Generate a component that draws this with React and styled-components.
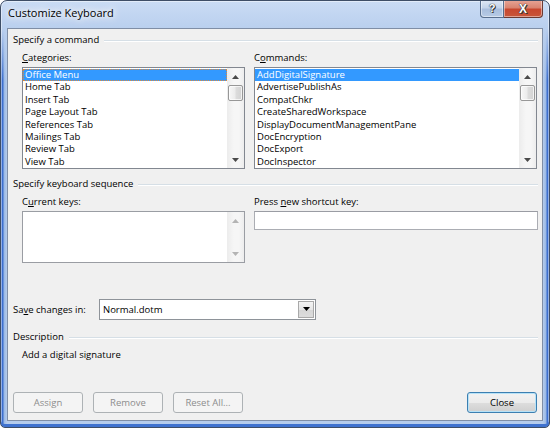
import React from "react";
import styled, { createGlobalStyle } from "styled-components";

const GlobalStyle = createGlobalStyle`
  html, body { margin: 0; padding: 0; background: #ffffff; }
  body { font-family: "Open Sans", "Liberation Sans", sans-serif; }
  * { box-sizing: border-box; }
`;

const Window = styled.div`
  width: 550px;
  height: 428px;
  border: 1px solid #3e4e66;
  border-radius: 7px 7px 5px 5px;
  display: flex;
  flex-direction: column;
  overflow: hidden;
  background:
    linear-gradient(to bottom, #cadcf4 0, #b9cfee 28px, rgba(182, 205, 238, 0) 80px),
    linear-gradient(
      to right,
      #3c6fcf 0,
      #3c6fcf 2px,
      #9ab8e4 3px,
      #b5ccec 6px,
      #b5ccec calc(100% - 6px),
      #9ab8e4 calc(100% - 3px),
      #3c6fcf calc(100% - 2px),
      #3c6fcf 100%
    );
  box-shadow: inset 0 -3px 0 #3f72cf, inset 0 0 0 1px rgba(255, 255, 255, 0.45);
`;

const TitleBar = styled.div`
  height: 27px;
  display: flex;
  align-items: flex-start;
  padding-left: 7px;
`;

const TitleText = styled.span`
  font-size: 11px;
  line-height: 23px;
  color: #000;
  text-shadow: 0 0 5px #ffffff, 0 0 9px #ffffff, 0 0 12px #ffffff;
`;

const TitleButtons = styled.div`
  display: flex;
  margin-left: auto;
  margin-right: 6px;
  margin-top: -1px;
`;

const CaptionButton = styled.div`
  width: ${(p) => p.$w}px;
  height: 18px;
  display: flex;
  align-items: center;
  justify-content: center;
  border: 1px solid ${(p) => (p.$red ? "#6b3a33" : "#586e8e")};
  border-top: none;
  border-radius: ${(p) => (p.$red ? "0 0 4px 0" : "0 0 0 4px")};
  ${(p) => (p.$red ? "border-left: none;" : "")}
  background: ${(p) =>
    p.$red
      ? "linear-gradient(to bottom, #e8a597 0, #d98471 45%, #c8472f 55%, #c8563a 100%)"
      : "linear-gradient(to bottom, #dfe8f5 0, #c4d4ea 45%, #a9bedd 55%, #b7cbe6 100%)"};
  box-shadow: inset 0 0 0 1px rgba(255, 255, 255, 0.45);
  color: #fff;
  font-family: "Liberation Sans", Arial, sans-serif;
  font-weight: bold;
  font-size: ${(p) => (p.$red ? 12 : 11)}px;
  line-height: 1;
  text-shadow: 0 0 1px #2a2a2a, 0 0 1px #2a2a2a, 1px 1px 0 #3a3a3a;
`;

const Client = styled.div`
  flex: 1;
  margin: 0 6px 6px 6px;
  background: #f0f0f0;
  border: 1px solid #7f8ea6;
  display: flex;
  flex-direction: column;
  padding: 4px 5px 7px 5px;
  font-size: 9.5px;
  color: #000;
`;

const SectionHeader = styled.div`
  display: flex;
  align-items: center;
  height: 14px;
  gap: 5px;
  margin-top: ${(p) => p.$top || 0}px;
  margin-right: -1px;
  line-height: 14px;
  white-space: nowrap;
`;

const Rule = styled.div`
  flex: 1;
  height: 1px;
  background: #d6dfe6;
  box-shadow: 0 1px 0 #ffffff;
`;

const FieldRow = styled.div`
  display: grid;
  grid-template-columns: 223px 1fr;
  column-gap: 9px;
  margin-left: 9px;
`;

const Field = styled.div`
  display: flex;
  flex-direction: column;
`;

const Label = styled.div`
  line-height: 14px;
  height: 14px;
  margin-top: 4px;
  margin-bottom: 2px;
  white-space: nowrap;
`;

const Key = styled.span`
  text-decoration: underline;
  text-underline-offset: 1px;
`;

const ListBox = styled.div`
  display: flex;
  height: ${(p) => p.$h}px;
  border: 1px solid ${(p) => p.$border || "#828790"};
  background: #ffffff;
`;

const Items = styled.div`
  flex: 1;
  padding-top: 1px;
  overflow: hidden;
`;

const Item = styled.div`
  height: 12.4px;
  line-height: 12.4px;
  padding-left: 2px;
  white-space: nowrap;
  background: ${(p) => (p.$selected ? "#3399ff" : "transparent")};
  color: ${(p) => (p.$selected ? "#ffffff" : "#000000")};
  outline: ${(p) => (p.$focus ? "1px dotted #e08a3a" : "none")};
  outline-offset: -1px;
`;

const ScrollBar = styled.div`
  width: 17px;
  display: flex;
  flex-direction: column;
  background: linear-gradient(to right, #ececec, #f6f6f6 40%, #f6f6f6 70%, #ededed);
`;

const ArrowButton = styled.div`
  height: 17px;
  display: flex;
  align-items: center;
  justify-content: center;
`;

const Track = styled.div`
  flex: 1;
`;

const Thumb = styled.div`
  height: 16px;
  margin: 0 1px;
  border: 1px solid #979797;
  border-radius: 2px;
  background: linear-gradient(to right, #f7f7f7, #ececec 45%, #dcdcdc 55%, #d2d2d2);
  box-shadow: inset 0 0 0 1px rgba(255, 255, 255, 0.7);
`;

const TextInput = styled.div`
  height: 19px;
  margin-right: -1px;
  border: 1px solid #abadb3;
  border-top-color: #9a9ca3;
  background: #ffffff;
`;

const SaveRow = styled.div`
  display: flex;
  align-items: center;
  height: 20px;
  margin-top: 36px;
`;

const SaveLabel = styled.div`
  width: 86px;
  white-space: nowrap;
`;

const SelectBox = styled.div`
  width: 217px;
  height: 21px;
  display: flex;
  align-items: center;
  border: 1px solid #8e9399;
  background: #ffffff;
`;

const SelectValue = styled.div`
  flex: 1;
  padding-left: 3px;
`;

const DropButton = styled.div`
  width: 16px;
  height: 17px;
  margin-right: 1px;
  display: flex;
  align-items: center;
  justify-content: center;
  border: 1px solid #a9a9a9;
  background: linear-gradient(to bottom, #f4f4f4, #e6e6e6 50%, #d6d6d6 51%, #dcdcdc);
`;

const DescText = styled.div`
  margin-top: 4px;
  padding-left: 9px;
  line-height: 14px;
`;

const ButtonRow = styled.div`
  display: flex;
  gap: 10px;
  margin-top: auto;
`;

const Button = styled.div`
  width: 70px;
  height: 21px;
  display: flex;
  align-items: center;
  justify-content: center;
  border-radius: 3px;
  ${(p) =>
    p.$default
      ? `
    margin-left: auto;
    border: 1px solid #3c7fb1;
    color: #000;
    background: linear-gradient(to bottom, #f2f2f2 0, #ebebeb 50%, #dddddd 51%, #cfcfcf 100%);
    box-shadow: inset 0 0 0 1px #b7e2f7;
  `
      : `
    border: 1px solid #adb2b5;
    color: #8d8d8d;
    background: #f4f4f4;
  `}
`;

const Tri = ({ dir = "up", color = "#4a4a4a" }) => (
  <svg width="7" height="4" viewBox="0 0 7 4">
    {dir === "up" ? (
      <polygon points="0,4 3.5,0 7,4" fill={color} />
    ) : (
      <polygon points="0,0 7,0 3.5,4" fill={color} />
    )}
  </svg>
);

const categories = [
  "Office Menu",
  "Home Tab",
  "Insert Tab",
  "Page Layout Tab",
  "References Tab",
  "Mailings Tab",
  "Review Tab",
  "View Tab",
];

const commands = [
  "AddDigitalSignature",
  "AdvertisePublishAs",
  "CompatChkr",
  "CreateSharedWorkspace",
  "DisplayDocumentManagementPane",
  "DocEncryption",
  "DocExport",
  "DocInspector",
];

const List = ({ items, focus }) => (
  <ListBox $h={102}>
    <Items>
      {items.map((t, i) => (
        <Item key={t} $selected={i === 0} $focus={focus && i === 0}>
          {t}
        </Item>
      ))}
    </Items>
    <ScrollBar>
      <ArrowButton>
        <Tri dir="up" />
      </ArrowButton>
      <Track>
        <Thumb />
      </Track>
      <ArrowButton>
        <Tri dir="down" />
      </ArrowButton>
    </ScrollBar>
  </ListBox>
);

export default function App() {
  return (
    <>
      <GlobalStyle />
      <Window>
        <TitleBar>
          <TitleText>Customize Keyboard</TitleText>
          <TitleButtons>
            <CaptionButton $w={24}>?</CaptionButton>
            <CaptionButton $w={39} $red>
              X
            </CaptionButton>
          </TitleButtons>
        </TitleBar>
        <Client>
          <SectionHeader>
            <span>Specify a command</span>
            <Rule />
          </SectionHeader>
          <FieldRow>
            <Field>
              <Label>
                <Key>C</Key>ategories:
              </Label>
              <List items={categories} focus />
            </Field>
            <Field>
              <Label>
                C<Key>o</Key>mmands:
              </Label>
              <List items={commands} />
            </Field>
          </FieldRow>
          <SectionHeader $top={8}>
            <span>Specify keyboard sequence</span>
            <Rule />
          </SectionHeader>
          <FieldRow>
            <Field>
              <Label>
                C<Key>u</Key>rrent keys:
              </Label>
              <ListBox $h={52} $border="#9a9da3">
                <Items />
                <ScrollBar>
                  <ArrowButton>
                    <Tri dir="up" color="#b4b4b4" />
                  </ArrowButton>
                  <Track />
                  <ArrowButton>
                    <Tri dir="down" color="#b4b4b4" />
                  </ArrowButton>
                </ScrollBar>
              </ListBox>
            </Field>
            <Field>
              <Label>
                Press <Key>n</Key>ew shortcut key:
              </Label>
              <TextInput />
            </Field>
          </FieldRow>
          <SaveRow>
            <SaveLabel>
              Sa<Key>v</Key>e changes in:
            </SaveLabel>
            <SelectBox>
              <SelectValue>Normal.dotm</SelectValue>
              <DropButton>
                <Tri dir="down" color="#000" />
              </DropButton>
            </SelectBox>
          </SaveRow>
          <SectionHeader $top={11}>
            <span>Description</span>
            <Rule />
          </SectionHeader>
          <DescText>Add a digital signature</DescText>
          <ButtonRow>
            <Button>Assign</Button>
            <Button>Remove</Button>
            <Button>Reset All...</Button>
            <Button $default>Close</Button>
          </ButtonRow>
        </Client>
      </Window>
    </>
  );
}
